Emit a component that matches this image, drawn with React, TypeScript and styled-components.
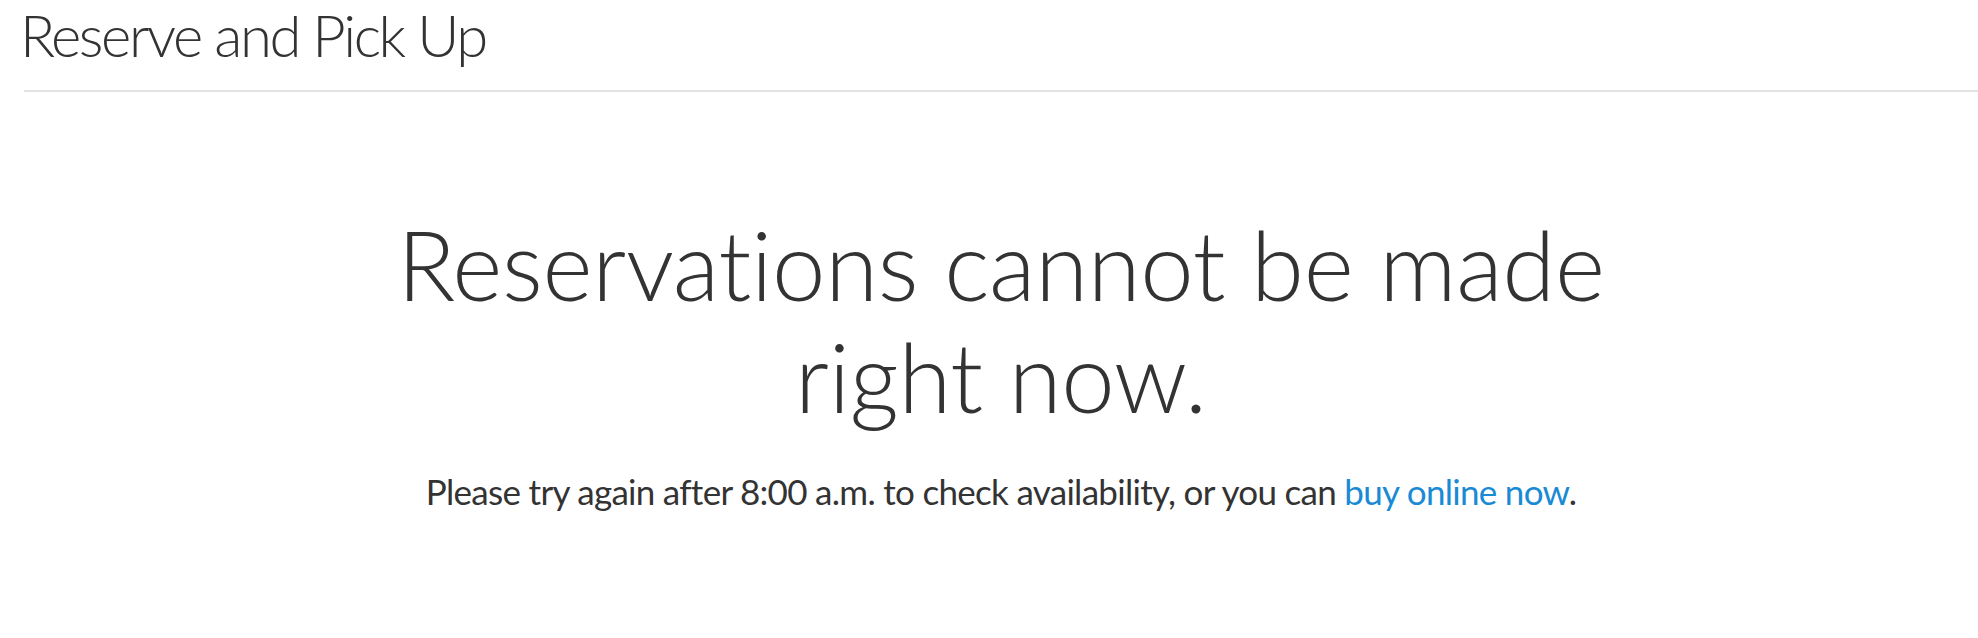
import React from "react";
import styled, { createGlobalStyle } from "styled-components";

const GlobalStyle = createGlobalStyle`
  html, body {
    margin: 0;
    padding: 0;
    background: #ffffff;
  }
  body {
    font-family: Lato, 'Open Sans', sans-serif;
    color: #333333;
  }
`;

const Page = styled.div`
  padding-left: 24px;
`;

const Header = styled.header`
  height: 92px;
  box-sizing: border-box;
  border-bottom: 2px solid #e3e3e3;
`;

const PageTitle = styled.h1`
  margin: 0 0 0 -4px;
  font-size: 58px;
  line-height: 70px;
  font-weight: 300;
  letter-spacing: -2.4px;
  color: #333333;
`;

const Notice = styled.section`
  display: flex;
  flex-direction: column;
  align-items: center;
  text-align: center;
  padding-top: 116px;
`;

const Headline = styled.h2`
  margin: 0;
  font-size: 96px;
  line-height: 112px;
  font-weight: 300;
  letter-spacing: -0.3px;
  color: #333333;
  max-width: 1300px;
`;

const Message = styled.p`
  margin: 38px 0 0;
  font-size: 35px;
  line-height: 42px;
  font-weight: 400;
  letter-spacing: -0.7px;
  color: #333333;
`;

const Link = styled.a`
  color: #1a8ad4;
  text-decoration: none;
`;

const App: React.FC = () => {
  return (
    <Page>
      <GlobalStyle />
      <Header>
        <PageTitle>Reserve and Pick Up</PageTitle>
      </Header>
      <Notice>
        <Headline>Reservations cannot be made right now.</Headline>
        <Message>
          Please try again after 8:00 a.m. to check availability, or you can{" "}
          <Link href="#">buy online now</Link>.
        </Message>
      </Notice>
    </Page>
  );
};

export default App;
